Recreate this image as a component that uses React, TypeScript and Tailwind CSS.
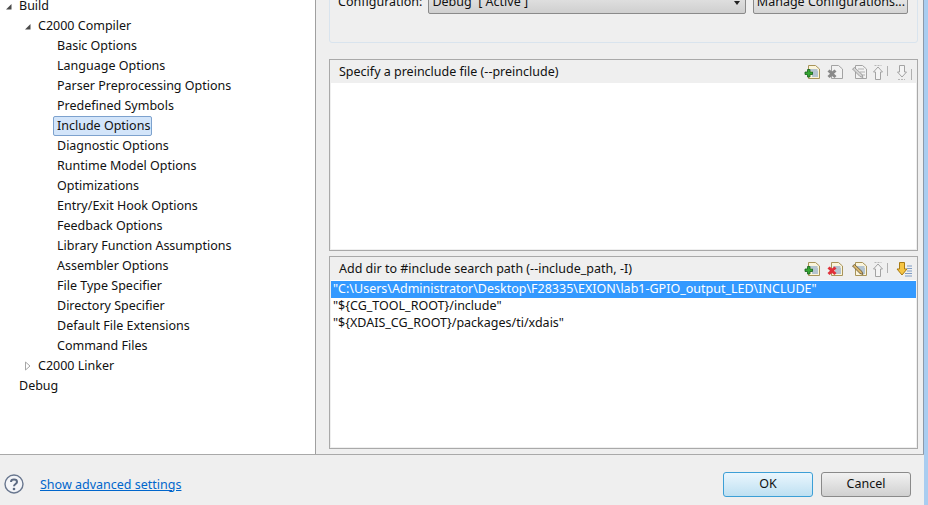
import React from 'react';

const font = { fontFamily: '"Noto Sans", "Liberation Sans", sans-serif' };

const options = [
  'Basic Options',
  'Language Options',
  'Parser Preprocessing Options',
  'Predefined Symbols',
  'Include Options',
  'Diagnostic Options',
  'Runtime Model Options',
  'Optimizations',
  'Entry/Exit Hook Options',
  'Feedback Options',
  'Library Function Assumptions',
  'Assembler Options',
  'File Type Specifier',
  'Directory Specifier',
  'Default File Extensions',
  'Command Files',
];

const OpenArrow = () => (
  <svg width="7" height="7" viewBox="0 0 7 7"><path d="M6.5 1 L6.5 6.5 L1 6.5 Z" fill="#4a4a4a" /></svg>
);

const ClosedArrow = () => (
  <svg width="7" height="10" viewBox="0 0 7 10"><path d="M1.5 1 L6 5 L1.5 9 Z" fill="#fff" stroke="#a6a6a6" /></svg>
);

const Doc = ({ on }: { on: boolean }) => (
  <>
    <path d="M4.5 1.5 H11.5 L15.5 5 V14.5 H4.5 Z" fill={on ? '#fbf5dc' : '#f2f2f2'} stroke={on ? '#a8945a' : '#a3a3a3'} />
    {on && <path d="M6 6 H13.5 M8 8 H14 M8 10 H14 M8 12 H14" stroke="#6f93c4" />}
  </>
);

const AddIcon = () => (
  <svg width="17" height="16" viewBox="0 0 17 16">
    <Doc on />
    <path d="M3.5 5.5 H6 V8 H8.5 V10.5 H6 V13 H3.5 V10.5 H1 V8 H3.5 Z" fill="#35a832" stroke="#17601a" strokeWidth="0.8" />
  </svg>
);

const DeleteIcon = ({ on }: { on: boolean }) => (
  <svg width="17" height="16" viewBox="0 0 17 16">
    <Doc on={on} />
    <path d="M2.5 5.5 L5 7.5 L7.5 5.5 L9.5 7.5 L7 9.8 L9.5 12 L7.5 14 L5 12 L2.5 14 L0.5 12 L3 9.8 L0.5 7.5 Z" fill={on ? '#e0313a' : '#8a8a8a'} />
  </svg>
);

const EditIcon = ({ on }: { on: boolean }) => (
  <svg width="17" height="16" viewBox="0 0 17 16">
    <Doc on={on} />
    {!on && <path d="M7 5 H13 M9 8 H14 M10 11 H14" stroke="#b0b0b0" />}
    <path d="M1.5 5 L3.5 3.5 L11 10.5 L12 13.5 L9 12.5 Z" fill={on ? '#d8b56a' : '#d4d4d4'} stroke={on ? '#5f5030' : '#8f8f8f'} strokeWidth="0.8" />
  </svg>
);

const UpIcon = () => (
  <svg width="19" height="17" viewBox="0 0 19 17">
    <path d="M3.5 1.5 H10.5" stroke="#b8b8b8" strokeDasharray="2 1" />
    <path d="M7 3 L11.5 8 H9.5 V15.5 H4.5 V8 H2.5 Z" fill="#f4f4f4" stroke="#a3a3a3" />
    <path d="M16.5 2 V12" stroke="#b0b0b0" />
  </svg>
);

const DownIcon = ({ on }: { on: boolean }) => (
  <svg width="19" height="17" viewBox="0 0 19 17">
    {on ? (
      <path d="M12 5 H17 M12 7.5 H17 M12 10 H17 M10 12.5 H17 M10 15 H17" stroke="#7f9cc4" />
    ) : (
      <>
        <path d="M3 15.5 H10" stroke="#b8b8b8" strokeDasharray="2 1" />
        <path d="M16.5 5 V16" stroke="#b0b0b0" />
      </>
    )}
    <path d={on ? 'M4.5 1.5 H9.5 V8 H12 L7 14 L2 8 H4.5 Z' : 'M4.5 1.5 H9.5 V8 H11.5 L7 13 L2.5 8 H4.5 Z'} fill={on ? '#f6c544' : '#f4f4f4'} stroke={on ? '#a87a12' : '#a3a3a3'} />
  </svg>
);

const PathBox = ({ title, active, paths, className }: { title: string; active: boolean; paths: string[]; className: string }) => (
  <div className={`ml-[13px] mr-[5px] flex flex-col border border-[#a9a9a9] bg-[#efefef] p-px ${className}`}>
    <div className="flex h-[22px] items-center justify-between pl-[8px] pr-[2px]">
      <span className="text-[12.5px] text-[#111]">{title}</span>
      <div className="flex items-center">
        <AddIcon />
        <span className="ml-[6px]"><DeleteIcon on={active} /></span>
        <span className="ml-[7px]"><EditIcon on={active} /></span>
        <span className="ml-[3px]"><UpIcon /></span>
        <span className="ml-[5px]"><DownIcon on={active} /></span>
      </div>
    </div>
    <div className="flex-1 bg-white pt-px">
      {paths.map((p, i) => (
        <div key={p} className={`h-[17px] pl-[2px] text-[12.5px] leading-[16px] ${i === 0 ? 'bg-[#3399ff] text-white' : 'text-[#111]'}`}>
          {p}
        </div>
      ))}
    </div>
  </div>
);

export default function App() {
  return (
    <div className="flex h-[505px] w-[928px] overflow-hidden bg-[#efefef]" style={font}>
      <div className="flex w-[924px] flex-col">
        <div className="flex h-[455px] border-b border-[#a9a9a9]">
          {/* tree */}
          <div className="w-[316px] shrink-0 overflow-hidden border-r border-[#a0a0a0] bg-white text-[12.5px] text-[#111]">
            <div className="-mt-[4px]">
              <div className="flex h-[20px] items-center pl-[5px]">
                <OpenArrow />
                <span className="ml-[7px]">Build</span>
              </div>
              <div className="flex h-[20px] items-center pl-[24px]">
                <OpenArrow />
                <span className="ml-[7px]">C2000 Compiler</span>
              </div>
              {options.map((o) => (
                <div key={o} className="flex h-[20px] items-center pl-[53px]">
                  {o === 'Include Options' ? (
                    <span className="flex h-[20px] items-center rounded-[2px] border border-[#7da2ce] bg-[#d3e5fa] pl-[3px] pr-[1px]">{o}</span>
                  ) : (
                    <span className="pl-[4px]">{o}</span>
                  )}
                </div>
              ))}
              <div className="flex h-[20px] items-center pl-[24px]">
                <ClosedArrow />
                <span className="ml-[7px]">C2000 Linker</span>
              </div>
              <div className="flex h-[20px] items-center pl-[19px]">Debug</div>
            </div>
          </div>
          {/* right side */}
          <div className="flex-1 overflow-hidden border-r border-[#8d99a8]">
            <div className="-mt-[10px] ml-[13px] mr-[5px] h-[53px] rounded-b-[3px] border border-[#d9e4ee] pl-[8px]">
              <div className="flex items-center text-[12.5px] text-[#111]">
                <span className="whitespace-nowrap">Configuration:</span>
                <div className="ml-[6px] flex h-[23px] w-[318px] items-center justify-between rounded-[2px] border border-[#8a8a8a] bg-gradient-to-b from-[#e8e8e8] to-[#cfcfcf] pl-[3px] pr-[5px]">
                  <span className="whitespace-pre">Debug  [ Active ]</span>
                  <svg width="6" height="4" viewBox="0 0 6 4"><path d="M0 0 H6 L3 4 Z" fill="#222" /></svg>
                </div>
                <div className="ml-[7px] flex h-[23px] w-[155px] items-center justify-center whitespace-nowrap rounded-[2px] border border-[#8a8a8a] bg-gradient-to-b from-[#f0f0f0] to-[#d4d4d4]">
                  Manage Configurations...
                </div>
              </div>
            </div>
            <PathBox className="mt-[16px] h-[192px]" title="Specify a preinclude file (--preinclude)" active={false} paths={[]} />
            <PathBox
              className="mt-[5px] h-[193px]"
              title="Add dir to #include search path (--include_path, -I)"
              active
              paths={[
                '"C:\\Users\\Administrator\\Desktop\\F28335\\EXION\\lab1-GPIO_output_LED\\INCLUDE"',
                '"${CG_TOOL_ROOT}/include"',
                '"${XDAIS_CG_ROOT}/packages/ti/xdais"',
              ]}
            />
          </div>
        </div>
        {/* footer */}
        <div className="flex flex-1 items-center justify-between pl-[4px] pr-[13px] pt-[8px]">
          <div className="flex items-center">
            <svg width="20" height="20" viewBox="0 0 20 20">
              <circle cx="10" cy="10" r="9" fill="#f4f5f8" stroke="#69778f" strokeWidth="1.4" />
              <path d="M7 8 C7 4.8 13 4.8 13 8 C13 10 10 10 10 12.2" fill="none" stroke="#5c6a82" strokeWidth="2" />
              <circle cx="10" cy="15" r="1.3" fill="#5c6a82" />
            </svg>
            <span className="ml-[16px] translate-y-px text-[12.5px] text-[#0066cc] underline">Show advanced settings</span>
          </div>
          <div className="flex gap-[8px] text-[12.5px] text-[#111]">
            <div className="flex h-[25px] w-[90px] items-center justify-center rounded-[3px] border border-[#3c9fd6] bg-gradient-to-b from-[#eaf6fd] to-[#bee0f2]">OK</div>
            <div className="flex h-[25px] w-[90px] items-center justify-center rounded-[3px] border border-[#8a8a8a] bg-gradient-to-b from-[#f2f2f2] to-[#d0d0d0]">Cancel</div>
          </div>
        </div>
      </div>
      {/* window edge */}
      <div className="w-[4px] bg-[#a9cdf0]" />
    </div>
  );
}
